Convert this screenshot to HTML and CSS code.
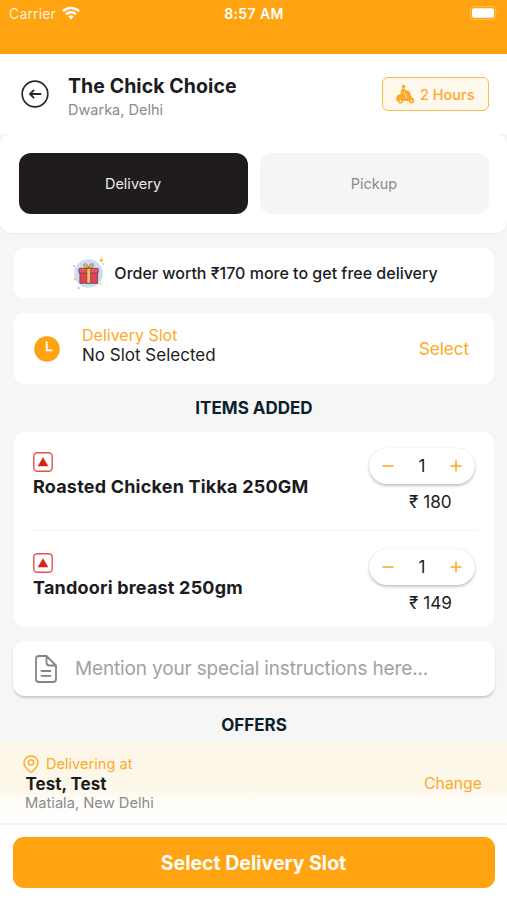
FILE: index.html
```html
<!DOCTYPE html>
<html lang="en">
<head>
<meta charset="utf-8">
<title>The Chick Choice</title>
<link rel="stylesheet" href="styles.css">
</head>
<body>
<div class="screen">
  <div class="status">
    <div class="carrier"><span>Carrier</span>
      <svg width="18" height="14" viewBox="0 0 18 14" fill="none" stroke="#fff" stroke-width="2.5"><path d="M1 5.2a11.4 11.4 0 0 1 16 0M4 8.4a7.1 7.1 0 0 1 10 0"/><path d="M6.2 10.6a4 4 0 0 1 5.6 0L9 13.6z" fill="#fff" stroke="none"/></svg>
    </div>
    <span class="time">8:57 AM</span>
    <svg class="battery" width="29" height="14" viewBox="0 0 29 14"><rect x=".5" y=".5" width="25" height="13" rx="3.5" fill="none" stroke="#ffbb55"/><rect x="2" y="2.2" width="22" height="9.6" rx="2" fill="#fff"/><path d="M27 5v4q2-2 0-4" fill="#ffc670"/></svg>
  </div>
  <header class="header">
    <svg class="back" width="28" height="28" viewBox="0 0 28 28" fill="none" stroke="#29292b" stroke-width="1.7" stroke-linecap="round" stroke-linejoin="round"><circle cx="14" cy="14" r="12.8"/><path d="M19.5 14H9M12.6 10.4 9 14l3.600 3.600" stroke-width="1.9"/></svg>
    <div class="shop"><h1>The Chick Choice</h1><p>Dwarka, Delhi</p></div>
    <div class="eta">
      <svg width="19" height="20" viewBox="0 0 19 20" fill="#ffa825"><circle cx="7.600" cy="2.500" r="1.700"/><path d="M6 4.500h2.700l1.300 2.300 2.300-.3.800 4-.6 5H5.500L4.700 10C4.700 8 5 6 6 4.500z"/><path d="M.7 12.500q1-2.500 5-2.500l1.300 3.700 4.500.6.5-7 1.500.2 2.200 5.700q2.500 1.200 2.900 3.800H.5q-.7-2.500.2-4.500z"/><path d="M8.300 7.500v2.300l1.900 1.400v3" fill="none" stroke="#fff8ed" stroke-width=".8"/><circle cx="4.500" cy="17" r="1.700" fill="#fff8ed" stroke="#ffa825" stroke-width="1.600"/><circle cx="15.600" cy="17" r="1.700" fill="#fff8ed" stroke="#ffa825" stroke-width="1.600"/></svg>
      <span>2 Hours</span>
    </div>
  </header>
  <div class="tabs"><div class="tab active"><span>Delivery</span></div><div class="tab"><span>Pickup</span></div></div>
  <main class="content">
    <section class="card promo">
      <svg width="32" height="32" viewBox="0 0 32 32"><circle cx="15.500" cy="16.500" r="14.300" fill="#cbdcf3"/><g fill="#f5c443" stroke="#65505b" stroke-width=".7"><path d="M15 11.500c-4-1-5-3-3.800-4.300 1.600-1.500 3.800.8 4.300 4.300zM16 11.500c4-1 5-3 3.800-4.300-1.600-1.500-3.800.8-4.300 4.300z"/></g><path d="M6.900 15.500h17.700v10.800H6.900z" fill="#e04255" stroke="#65404f" stroke-width=".8"/><rect x="5.900" y="11.300" width="19.400" height="4.800" rx="1" fill="#ef5261" stroke="#65404f" stroke-width=".8"/><path d="M14 11.500h3.300v14.600H14z" fill="#f8cc51" stroke="#65404f" stroke-width=".5"/><circle cx="28.300" cy="3.300" r="1.700" fill="#f5bd30"/><circle cx="2" cy="22" r="1.500" fill="#f2d36f"/><circle cx="27.500" cy="27" r="1.100" fill="#f2d36f"/><circle cx="1" cy="9" r=".9" fill="#8cb7d8"/><circle cx="30" cy="7" r=".8" fill="#8cb7d8"/><circle cx="5.500" cy="31" r="1" fill="#8cb7d8"/></svg>
      <span class="promo-text">Order worth ₹170 more to get free delivery</span>
    </section>
    <section class="card slot">
      <svg width="26" height="26" viewBox="0 0 26 26"><circle cx="13" cy="13" r="12.800" fill="#ffa310"/><path d="M12.700 5.500v8.800h6" fill="none" stroke="#fff" stroke-width="1.800"/></svg>
      <div class="slot-info"><p class="slot-label"><span>Delivery Slot</span></p><p class="slot-value"><span>No Slot Selected</span></p></div>
      <span class="select">Select</span>
    </section>
    <h2 class="heading"><span>ITEMS ADDED</span></h2>
    <section class="card items">
      <article class="item">
        <div class="dish"><svg width="20" height="20" viewBox="0 0 20 20"><rect x=".8" y=".8" width="18.400" height="18.400" rx="3.500" fill="none" stroke="#e2504d" stroke-width="1.400"/><path d="m10 5.300 5.300 9H4.700z" fill="#dc2019"/></svg><h3>Roasted Chicken Tikka 250GM</h3></div>
        <div class="amount"><div class="stepper"><svg width="12" height="12" viewBox="0 0 12 12" stroke="#ffa825" stroke-width="1.600"><path d="M.5 6h11"/></svg><span>1</span><svg width="12" height="12" viewBox="0 0 12 12" stroke="#ffa825" stroke-width="1.600"><path d="M.5 6h11M6 .5v11"/></svg></div><p class="price">₹ 180</p></div>
      </article>
      <article class="item">
        <div class="dish"><svg width="20" height="20" viewBox="0 0 20 20"><rect x=".8" y=".8" width="18.400" height="18.400" rx="3.500" fill="none" stroke="#e2504d" stroke-width="1.400"/><path d="m10 5.300 5.300 9H4.700z" fill="#dc2019"/></svg><h3>Tandoori breast 250gm</h3></div>
        <div class="amount"><div class="stepper"><svg width="12" height="12" viewBox="0 0 12 12" stroke="#ffa825" stroke-width="1.600"><path d="M.5 6h11"/></svg><span>1</span><svg width="12" height="12" viewBox="0 0 12 12" stroke="#ffa825" stroke-width="1.600"><path d="M.5 6h11M6 .5v11"/></svg></div><p class="price">₹ 149</p></div>
      </article>
    </section>
    <section class="note">
      <svg width="22" height="28" viewBox="0 0 22 28" fill="none" stroke="#858585" stroke-width="1.800" stroke-linejoin="round" stroke-linecap="round"><path d="M11.500 1H4a3 3 0 0 0-3 3v20a3 3 0 0 0 3 3h14a3 3 0 0 0 3-3V10.500zM11.500 1v6.500a3 3 0 0 0 3 3H21M6.500 16h9M6.500 20.800h9"/></svg>
      <span class="placeholder">Mention your special instructions here...</span>
    </section>
    <h2 class="heading offers"><span>OFFERS</span></h2>
  </main>
  <section class="address">
    <div class="where">
      <p class="at"><svg width="16" height="18" viewBox="0 0 16 18" fill="none" stroke="#ffa825" stroke-width="1.400"><path d="M8 1C4 1 1 4 1 7.700c0 3.600 3 6.300 5.400 8.600q1.600 1.400 3.200 0C12 14 15 11.300 15 7.700 15 4 12 1 8 1z"/><circle cx="8" cy="7.500" r="2.600"/></svg><span>Delivering at</span></p>
      <p class="name"><span>Test, Test</span></p>
      <p class="area"><span>Matiala, New Delhi</span></p>
    </div>
    <span class="change">Change</span>
  </section>
  <footer class="footer"><button class="cta"><span>Select Delivery Slot</span></button></footer>
</div>
</body>
</html>
```
FILE: styles.css
```css
* { box-sizing: border-box; }
body, h1, h2, h3, p { margin: 0; }
body { background: #f6f6f6; color: #1c1c1e; font-family: Inter, "Liberation Sans", sans-serif; }
svg { display: block; flex: none; }
span, h1, h3 { white-space: nowrap; }
.screen { width: 507px; height: 900px; display: flex; flex-direction: column; overflow: hidden; }
.status { height: 54px; flex: none; background: #ffa310; color: #fff; display: grid; grid-template-columns: 1fr auto 1fr; align-items: start; padding: 4px 8px 0 9px; font-size: 14px; line-height: 20px; }
.carrier { display: flex; gap: 6px; color: #fff2db; letter-spacing: .15px; }
.carrier svg { margin-top: 2px; }
.time { font-weight: 600; font-size: 14px; letter-spacing: .4px; }
.battery { justify-self: end; margin-top: 2px; }
.header { height: 80px; flex: none; background: #fff; display: flex; align-items: flex-start; padding: 19px 18px 0 20.500px; }
.back { margin-top: 7px; }
.shop { margin-left: 19.500px; flex: 1; }
.shop h1 { font-size: 19.500px; line-height: 26px; font-weight: 700; letter-spacing: .07px; }
.shop p { font-size: 14.500px; line-height: 20px; margin-top: 1px; color: #8b8b8b; }
.eta { width: 107px; height: 34px; margin-top: 4px; border: 1.500px solid #ffb84a; border-radius: 6px; background: #fff8ed; color: #ffa825; display: flex; align-items: center; padding-left: 13px; gap: 5px; font-size: 14.500px; font-weight: 500; }
.tabs { height: 99px; flex: none; background: #fff; border-radius: 12px; box-shadow: 0 1px 2px #0000000d; display: grid; grid-template-columns: 1fr 1fr; gap: 12px; padding: 18.500px 18.500px 19px; }
.tab { display: flex; align-items: center; justify-content: center; border-radius: 12px; background: #f5f5f5; color: #8c8c8c; font-size: 14.500px; }
.tab.active { background: #201c1d; color: #e9e9e9; }
.content { height: 508px; flex: none; padding: 15px 12px 0 13px; display: flex; flex-direction: column; }
.card { margin: 0 1px; background: #fff; border-radius: 10px; flex: none; }
.promo { height: 50px; display: flex; align-items: center; justify-content: center; gap: 9px; padding-left: 3px; font-size: 16px; font-weight: 500; }
.slot { height: 71px; margin-top: 15px; padding: 0 25px 0 20px; display: flex; align-items: center; }
.slot-info { flex: 1; margin-left: 22px; line-height: 20px; margin-top: -6px; }
.slot-label, .select { color: #ffa825; }
.slot-label { font-size: 16px; line-height: 19px; }
.slot-value { font-size: 17px; line-height: 21px; }
.select { font-size: 17px; }
.heading { height: 48px; line-height: 48px; flex: none; text-align: center; font-size: 17px; font-weight: 700; color: #0c1f2c; }
.items { height: 195px; padding: 0 16px 0 19px; }
.item { height: 98px; display: flex; justify-content: space-between; padding-top: 16px; }
.item + .item { border-top: 1px solid #f3f3f3; padding-top: 18px; height: 97px; }
.dish { padding-top: 4px; }
.dish h3 { margin-top: 2px; font-size: 18px; line-height: 25px; font-weight: 700; letter-spacing: .2px; }
.amount { width: 109px; }
.stepper { width: 106px; height: 36px; border-radius: 18px; background: #fff; box-shadow: 0 2px 3px #00000038, 0 0 1px #00000033; display: flex; align-items: center; justify-content: space-between; padding: 0 13px; font-size: 17px; }
.price { margin-top: 6px; padding-left: 40px; font-size: 17.200px; line-height: 24px; }
.note { height: 55px; margin-top: 14px; flex: none; border-radius: 12px; background: #fff; box-shadow: 0 2px 2px #0000002e; display: flex; align-items: center; padding-left: 22px; gap: 18px; font-size: 19px; letter-spacing: -.15px; color: #a2a2a2; }
.offers { height: 56px; line-height: 58px; }
.address { height: 82px; flex: none; background: linear-gradient(#fdf7ea 0, #fdf7ea 55%, #fffefb 80%, #fff); display: flex; align-items: center; padding: 2px 25px 0 23px; }
.where { flex: 1; }
.at { display: flex; align-items: center; gap: 7px; font-size: 14.600px; line-height: 20px; color: #ffa825; }
.name { padding-left: 2.500px; font-size: 17px; line-height: 20px; font-weight: 700; }
.area { padding-left: 2px; font-size: 14.700px; line-height: 19px; color: #8b8b8b; }
.change { font-size: 15.800px; color: #ffa825; }
.footer { flex: 1; background: #fff; border-top: 2px solid #f5f5f5; padding: 12px 12.500px 0; }
.cta { display: block; width: 100%; height: 51px; border: 0; border-radius: 11px; background: #ffa310; color: #fffdf8; font: 700 19.500px Inter, "Liberation Sans", sans-serif; }
```
